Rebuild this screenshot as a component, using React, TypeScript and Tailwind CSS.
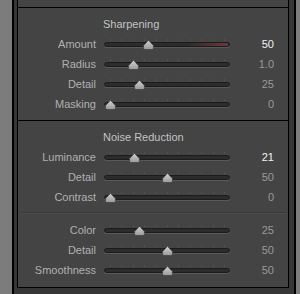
import React from "react";

type Row = { label: string; value: string; pos: number; active?: boolean; red?: boolean };

const sharpening: Row[] = [
  { label: "Amount", value: "50", pos: 50 / 150, active: true, red: true },
  { label: "Radius", value: "1.0", pos: 0.2 },
  { label: "Detail", value: "25", pos: 0.25 },
  { label: "Masking", value: "0", pos: 0 },
];

const luminance: Row[] = [
  { label: "Luminance", value: "21", pos: 0.21, active: true },
  { label: "Detail", value: "50", pos: 0.5 },
  { label: "Contrast", value: "0", pos: 0 },
];

const color: Row[] = [
  { label: "Color", value: "25", pos: 0.25 },
  { label: "Detail", value: "50", pos: 0.5 },
  { label: "Smoothness", value: "50", pos: 0.5 },
];

function Slider({ pos, red }: { pos: number; red?: boolean }) {
  const ticks = Array.from({ length: 11 }, (_, i) => i);
  return (
    <div className="relative h-[20px] w-[126px]">
      {/* tick marks */}
      {ticks.map((i) => (
        <span
          key={i}
          className="absolute top-[5px] h-[2px] w-px bg-[#525252]"
          style={{ left: 6 + i * 11.4 }}
        />
      ))}
      {/* track */}
      <div className="absolute left-0 right-0 top-[8px] h-[5px] rounded-full border border-[#1c1c1c] bg-[#2c2c2c] shadow-[0_1px_0_#595959]">
        {red && (
          <div className="absolute right-[1px] top-0 h-[3px] w-[40px] rounded-full bg-gradient-to-r from-transparent to-[#6e3838]" />
        )}
      </div>
      {/* thumb */}
      <svg
        className="absolute top-[6px]"
        style={{ left: 6 + pos * 114 - 5 }}
        width="11"
        height="10"
        viewBox="0 0 11 10"
      >
        <defs>
          <linearGradient id="th" x1="0" y1="0" x2="0" y2="1">
            <stop offset="0" stopColor="#d2d2d2" />
            <stop offset="1" stopColor="#999" />
          </linearGradient>
        </defs>
        <path
          d="M5.5 0.3 L10.4 5.6 L10.4 8.2 Q10.4 9.5 9.1 9.5 L1.9 9.5 Q0.6 9.5 0.6 8.2 L0.6 5.6 Z"
          fill="url(#th)"
          stroke="#383838"
          strokeWidth="0.6"
        />
      </svg>
    </div>
  );
}

function SliderRow({ row }: { row: Row }) {
  return (
    <div className="flex h-[20px] items-center">
      <div className="w-[78px] text-right text-[#b0b0b0]">{row.label}</div>
      <div className="ml-[8px]">
        <Slider pos={row.pos} red={row.red} />
      </div>
      <div className={`w-[44px] text-right ${row.active ? "text-[#f2f2f2]" : "text-[#999999]"}`}>{row.value}</div>
    </div>
  );
}

export default function App() {
  return (
    <div
      className="h-[294px] w-[300px] bg-[#7c7c7c] pl-[12px] pr-[4px] text-[11px] leading-none"
      style={{ fontFamily: '"Liberation Sans", Arial, sans-serif' }}
    >
      <div className="h-full border-x-2 border-black bg-[#363636] pl-[3px] pr-[5px]">
        <div className="h-[288px] border-x border-b border-black bg-[#444444]">
          <div className="h-[8px] border-b border-black" />
          <div className="border-b border-black pt-[6px] pb-[6px]">
            <div className="flex h-[20px] items-center pl-[85px] text-[#c2c2c2]">Sharpening</div>
            {sharpening.map((r) => (
              <SliderRow key={r.label} row={r} />
            ))}
          </div>
          <div className="pt-[6px]">
            <div className="flex h-[20px] items-center pl-[85px] text-[#c2c2c2]">Noise Reduction</div>
            {luminance.map((r) => (
              <SliderRow key={r.label} row={r} />
            ))}
            <div className="mx-[2px] mt-[5px] mb-[6px] h-[2px] border-t border-[#3a3a3a] border-b border-b-[#4c4c4c]" />
            {color.map((r) => (
              <SliderRow key={r.label} row={r} />
            ))}
          </div>
        </div>
      </div>
    </div>
  );
}
